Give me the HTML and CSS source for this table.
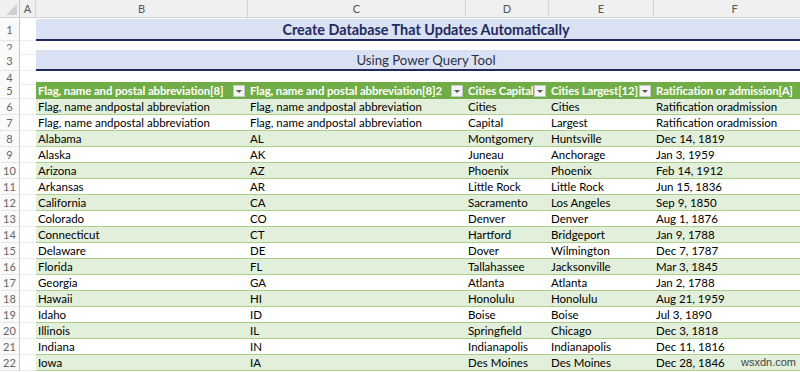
FILE: index.html
```html
<!DOCTYPE html>
<html lang="en">
<head>
<meta charset="utf-8">
<title>Create Database That Updates Automatically</title>
<link rel="stylesheet" href="styles.css">
</head>
<body>
<div class="sheet">
  <div class="row colhead">
    <div class="corner"><svg width="20" height="18" viewBox="0 0 20 18"><polygon points="17,4 17,15 6,15" fill="#d0d0d0"/></svg></div>
    <div class="ch">A</div><div class="ch">B</div><div class="ch">C</div><div class="ch">D</div><div class="ch">E</div><div class="ch">F</div>
  </div>

  <div class="row r1"><div class="rh">1</div><div class="a"></div><div class="band title">Create Database That Updates Automatically</div></div>
  <div class="row r2"><div class="rh">2</div><div class="a"></div><div class="blank"></div></div>
  <div class="row r3"><div class="rh">3</div><div class="a"></div><div class="band sub">Using Power Query Tool</div></div>
  <div class="row r4"><div class="rh">4</div><div class="a"></div><div class="blank"></div></div>

  <div class="row r5">
    <div class="rh">5</div><div class="a"></div>
    <div class="th"><span>Flag, name and postal abbreviation[8]</span><i class="fb"></i></div>
    <div class="th"><span>Flag, name and postal abbreviation[8]2</span><i class="fb"></i></div>
    <div class="th"><span>Cities Capital</span><i class="fb"></i></div>
    <div class="th"><span>Cities Largest[12]</span><i class="fb"></i></div>
    <div class="th"><span>Ratification or admission[A]</span><i class="fb"></i></div>
  </div>

  <div class="row d even"><div class="rh">6</div><div class="a"></div><div class="td">Flag, name andpostal abbreviation</div><div class="td">Flag, name andpostal abbreviation</div><div class="td">Cities</div><div class="td">Cities</div><div class="td">Ratification oradmission</div></div>
  <div class="row d"><div class="rh">7</div><div class="a"></div><div class="td">Flag, name andpostal abbreviation</div><div class="td">Flag, name andpostal abbreviation</div><div class="td">Capital</div><div class="td">Largest</div><div class="td">Ratification oradmission</div></div>
  <div class="row d even"><div class="rh">8</div><div class="a"></div><div class="td">Alabama</div><div class="td">AL</div><div class="td">Montgomery</div><div class="td">Huntsville</div><div class="td">Dec 14, 1819</div></div>
  <div class="row d"><div class="rh">9</div><div class="a"></div><div class="td">Alaska</div><div class="td">AK</div><div class="td">Juneau</div><div class="td">Anchorage</div><div class="td">Jan 3, 1959</div></div>
  <div class="row d even"><div class="rh">10</div><div class="a"></div><div class="td">Arizona</div><div class="td">AZ</div><div class="td">Phoenix</div><div class="td">Phoenix</div><div class="td">Feb 14, 1912</div></div>
  <div class="row d"><div class="rh">11</div><div class="a"></div><div class="td">Arkansas</div><div class="td">AR</div><div class="td">Little Rock</div><div class="td">Little Rock</div><div class="td">Jun 15, 1836</div></div>
  <div class="row d even"><div class="rh">12</div><div class="a"></div><div class="td">California</div><div class="td">CA</div><div class="td">Sacramento</div><div class="td">Los Angeles</div><div class="td">Sep 9, 1850</div></div>
  <div class="row d"><div class="rh">13</div><div class="a"></div><div class="td">Colorado</div><div class="td">CO</div><div class="td">Denver</div><div class="td">Denver</div><div class="td">Aug 1, 1876</div></div>
  <div class="row d even"><div class="rh">14</div><div class="a"></div><div class="td">Connecticut</div><div class="td">CT</div><div class="td">Hartford</div><div class="td">Bridgeport</div><div class="td">Jan 9, 1788</div></div>
  <div class="row d"><div class="rh">15</div><div class="a"></div><div class="td">Delaware</div><div class="td">DE</div><div class="td">Dover</div><div class="td">Wilmington</div><div class="td">Dec 7, 1787</div></div>
  <div class="row d even"><div class="rh">16</div><div class="a"></div><div class="td">Florida</div><div class="td">FL</div><div class="td">Tallahassee</div><div class="td">Jacksonville</div><div class="td">Mar 3, 1845</div></div>
  <div class="row d"><div class="rh">17</div><div class="a"></div><div class="td">Georgia</div><div class="td">GA</div><div class="td">Atlanta</div><div class="td">Atlanta</div><div class="td">Jan 2, 1788</div></div>
  <div class="row d even"><div class="rh">18</div><div class="a"></div><div class="td">Hawaii</div><div class="td">HI</div><div class="td">Honolulu</div><div class="td">Honolulu</div><div class="td">Aug 21, 1959</div></div>
  <div class="row d"><div class="rh">19</div><div class="a"></div><div class="td">Idaho</div><div class="td">ID</div><div class="td">Boise</div><div class="td">Boise</div><div class="td">Jul 3, 1890</div></div>
  <div class="row d even"><div class="rh">20</div><div class="a"></div><div class="td">Illinois</div><div class="td">IL</div><div class="td">Springfield</div><div class="td">Chicago</div><div class="td">Dec 3, 1818</div></div>
  <div class="row d"><div class="rh">21</div><div class="a"></div><div class="td">Indiana</div><div class="td">IN</div><div class="td">Indianapolis</div><div class="td">Indianapolis</div><div class="td">Dec 11, 1816</div></div>
  <div class="row d even"><div class="rh">22</div><div class="a"></div><div class="td">Iowa</div><div class="td">IA</div><div class="td">Des Moines</div><div class="td">Des Moines</div><div class="td">Dec 28, 1846</div></div>

  <div class="watermark">wsxdn.com</div>
</div>
</body>
</html>
```

FILE: styles.css
```css
html, body {
  margin: 0;
  padding: 0;
  overflow: hidden;
  background: #ffffff;
}

.sheet {
  --cols: 20px 16px 212px 218px 83px 105px 162px;
  position: relative;
  width: 816px;
  font-family: Lato, "Noto Sans", "Liberation Sans", sans-serif;
  font-size: 11.5px;
  color: #000;
}

.row {
  display: grid;
  grid-template-columns: var(--cols);
}

/* column header */
.colhead {
  height: 18px;
  background: #f0f0f0;
  border-bottom: 1px solid #d4d4d4;
  box-sizing: border-box;
}
.corner {
  border-right: 1px solid #c8c8c8;
  overflow: hidden;
}
.corner svg { display: block; }
.ch {
  display: flex;
  align-items: center;
  justify-content: center;
  color: #555;
  font-size: 11px;
  border-right: 1px solid #d4d4d4;
}

/* row header */
.rh {
  display: flex;
  align-items: center;
  justify-content: center;
  color: #666;
  font-size: 11px;
  background: #fafafa;
  border-right: 1px solid #c8c8c8;
  border-bottom: 1px solid #e6e6e6;
  box-sizing: border-box;
}
.a {
  border-bottom: 1px solid #ededed;
  box-sizing: border-box;
}

.r1 { height: 23px; }
.r2 { height: 9px; }
.r3 { height: 21px; }
.r4 { height: 11px; }
.r5 { height: 17px; }
.d { height: 16px; }

.blank { grid-column: 3 / -1; }

.band {
  grid-column: 3 / -1;
  display: flex;
  align-items: center;
  justify-content: center;
  background: #d9e1f2;
  border-bottom: 2px solid #1f2a5e;
  box-sizing: border-box;
}
.title {
  margin-top: 1px;
  font-weight: 700;
  font-size: 14.4px;
  color: #222a5e;
}
.sub {
  font-size: 13.2px;
  color: #2b3245;
}

/* table header */
.th {
  display: flex;
  align-items: center;
  justify-content: space-between;
  background: #70ad47;
  color: #fff;
  font-weight: 700;
  font-size: 11.4px;
  letter-spacing: -0.1px;
  padding: 0 2px 0 2px;
  overflow: hidden;
  white-space: nowrap;
}
.th span { overflow: hidden; }
.fb {
  flex: none;
  width: 10px;
  height: 10px;
  margin-right: 1px;
  background: #f4f4f4;
  border: 1px solid #c6c6c6;
  position: relative;
}
.fb::after {
  content: "";
  position: absolute;
  left: 2px;
  top: 4px;
  border-left: 3px solid transparent;
  border-right: 3px solid transparent;
  border-top: 3px solid #555;
}

/* data rows */
.td {
  display: flex;
  align-items: center;
  padding: 0 2px;
  white-space: nowrap;
  overflow: hidden;
  background: #ffffff;
  border-bottom: 1px solid #a9d08e;
  box-sizing: border-box;
}
.even .td { background: #e2efda; }

.watermark {
  position: absolute;
  left: 741px;
  top: 356px;
  font-family: "Liberation Sans", sans-serif;
  font-size: 11px;
  color: #444;
}
```
